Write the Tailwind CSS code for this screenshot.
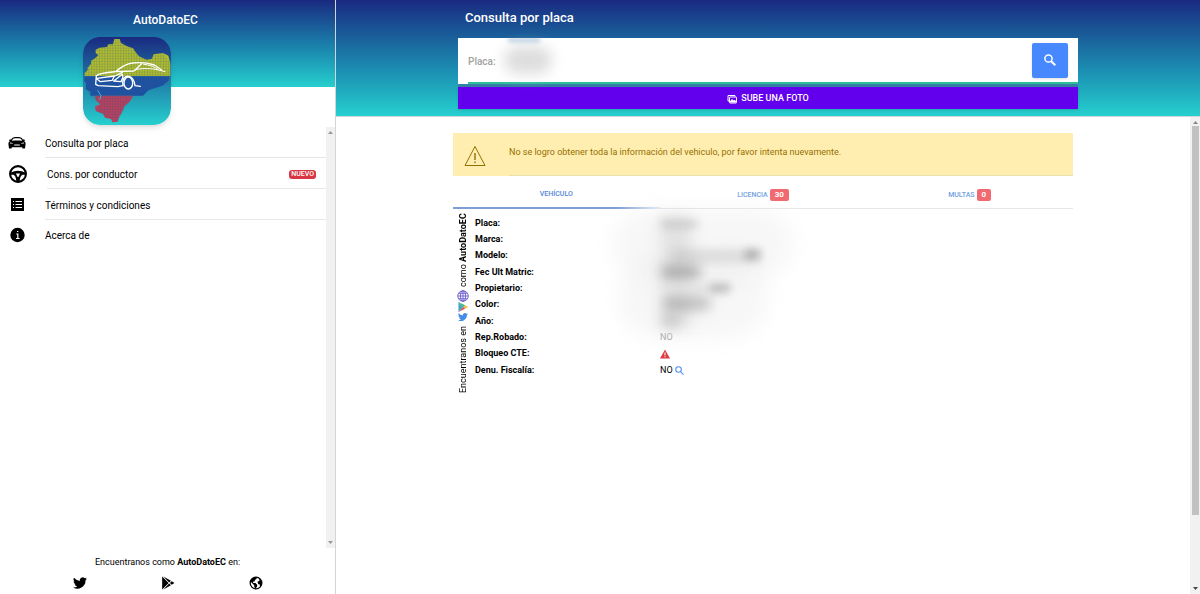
<!DOCTYPE html>
<html lang="es">
<head>
  <meta charset="utf-8">
  <meta name="viewport" content="width=device-width, initial-scale=1">
  <title>AutoDatoEC</title>
  <script src="https://cdn.jsdelivr.net/npm/@tailwindcss/browser@4"></script>
</head>
<body class="flex h-screen overflow-hidden bg-white font-[Roboto,sans-serif] text-black">

  <!-- Side menu -->
  <aside class="flex w-[28%] shrink-0 flex-col border-r border-gray-300">
    <header class="h-[87px] shrink-0 bg-linear-to-b from-[#1a2980] to-[#26d0ce] pt-2">
      <h1 class="pr-1 text-center text-[12px] leading-6 font-medium text-white">AutoDatoEC</h1>
      <svg class="mt-[5px] ml-[83px] size-[88px] rounded-[17px] shadow-md" viewBox="0 0 264 264" role="img" aria-label="Logo de AutoDatoEC">
        <defs>
          <linearGradient id="sky" x1="0" y1="0" x2="0" y2="1">
            <stop offset="0" stop-color="#1a2980" />
            <stop offset="1" stop-color="#26d0ce" />
          </linearGradient>
          <pattern id="grid" width="8" height="8" patternUnits="userSpaceOnUse">
            <path d="M0 0H8M0 0V8" stroke="#1f5a8f" stroke-width="3" stroke-opacity=".45" />
          </pattern>
        </defs>
        <rect width="264" height="264" rx="50" fill="url(#sky)" />
        <path fill="#b5bd2b" d="M5 118V108L14 100V92L24 80V72L38 62L46 54L38 48V38L50 32L72 30L76 22H90L94 6H110L114 18L132 28L150 34L158 46L168 58L190 68L206 66L212 52L240 48L256 56L262 80V118Z" />
        <path fill="#1f4fa3" d="M5 118H260L256 132L238 146L214 154L196 160L180 176H22V164L8 156L10 140L4 132Z" />
        <path fill="#bd3f5b" d="M36 176H150L142 192L124 208L116 228L108 240L104 254L88 256L84 246L66 242L60 230L38 222L36 208L52 202L38 190Z" />
        <path fill="url(#grid)" d="M5 118V108L24 72L46 54L38 38L76 22L94 6H110L150 34L168 58L190 68L212 52L240 48L262 80V118L256 132L196 160L150 176L116 228L104 254L84 246L38 222L52 202L22 176L8 156Z" />
        <path fill="none" stroke="#3db4d0" stroke-width="3" d="M44 160L54 176L50 188" />
        <g fill="none" stroke="#fff" stroke-width="4" stroke-linecap="round" stroke-linejoin="round">
          <path d="M40 116C50 108 76 106 98 104C114 90 130 80 148 78C172 75 196 78 214 84L236 99M98 104L152 102C162 96 168 86 176 80" />
          <path stroke-width="3" d="M156 98C184 92 216 94 246 104M182 82C202 84 216 90 226 98" />
          <path d="M40 116L38 142L46 146L104 149L120 146M42 124L94 117L88 130L52 134L42 126M96 117L118 106M118 112L92 132L114 134L120 120Z" />
          <path d="M120 146C116 126 126 116 138 118C150 120 154 132 156 146L172 148" />
          <ellipse cx="136" cy="138" rx="13" ry="18" />
        </g>
      </svg>
    </header>

    <nav class="mt-10 flex min-h-0 flex-1">
      <ul class="min-w-0 flex-1 text-[10px]">
        <li class="flex h-[31px] items-center pl-2">
          <svg class="size-[18px] shrink-0" viewBox="0 0 512 512" aria-hidden="true">
            <path fill-rule="evenodd" d="M488 224c-3-5-33-18-33-18c17-3 25-8 25-32c0-14-8-20-24-20h-34c-18-30-36-52-58-57c-58-11-158-11-216 0c-22 5-40 27-58 57H56c-16 0-24 6-24 20c0 24 8 29 25 32c0 0-30 13-33 18c-12 14-12 50-8 98c2 28 8 42 8 42v28c0 14 6 20 16 20h50c12 0 18-8 18-18v-14h296v14c0 12 6 18 16 18h52c10 0 16-8 16-20v-28s6-14 8-42c4-48 4-84-8-98ZM130 153c9-15 20-24 32-27c50-8 138-8 188 0c12 3 23 12 32 27l20 36c-70-10-222-10-292 0ZM56 270v-30l76 18c10 4 14 6 14 14H66c-6 0-10-2-10-2Zm270 58H186c-10 0-12-4-12-10l4-14c2-6 8-8 14-8h128c8 0 12 2 14 8l4 14c0 6-2 10-12 10Zm130-58s-4 2-10 2h-80c0-8 4-10 14-14l76-18Z" />
          </svg>
          <a href="#" class="ml-[19px] flex flex-1 items-center self-stretch border-b border-gray-200 pt-0.5">Consulta por placa</a>
        </li>
        <li class="flex h-[31px] items-center pl-2">
          <svg class="size-5 shrink-0" viewBox="0 0 24 24" aria-hidden="true">
            <circle cx="12" cy="12" r="9.500" fill="none" stroke="#000" stroke-width="2.500" />
            <path d="M3 10.500Q12 5.500 21 10.500V13H17.500Q14.500 14 14 21H10Q9.500 14 6.500 13H3Z" />
            <path fill="#fff" d="M9.500 11.500H14.500L12.500 15.500H11.500Z" />
          </svg>
          <a href="#" class="ml-[19px] flex flex-1 items-center self-stretch border-b border-gray-200 pt-0.5 pr-[10px]">
            Cons. por conductor
            <span class="ml-auto rounded-[3px] bg-[#d93644] px-0.5 text-[7px] leading-[9px] font-medium text-white">NUEVO</span>
          </a>
        </li>
        <li class="flex h-[31px] items-center pl-2">
          <svg class="size-[18px] shrink-0" viewBox="0 0 18 18" aria-hidden="true">
            <path d="M3 2H16V15H3Z" />
            <path stroke="#fff" stroke-width="1" d="M5 5.500H6M7.500 5.500H14M5 8.500H6M7.500 8.500H14M5 11.500H6M7.500 11.500H14" />
          </svg>
          <a href="#" class="ml-[19px] flex flex-1 items-center self-stretch border-b border-gray-200 pt-0.5">Términos y condiciones</a>
        </li>
        <li class="flex h-[31px] items-center pl-2">
          <svg class="size-[18px] shrink-0" viewBox="0 0 18 18" aria-hidden="true">
            <circle cx="9.500" cy="8" r="7.200" />
            <path fill="none" stroke="#fff" stroke-width="1.200" d="M8.300 7H9.800V11.500M8 11.500H11.600M9 4.500H10.300" />
          </svg>
          <a href="#" class="ml-[19px] flex flex-1 items-center self-stretch">Acerca de</a>
        </li>
      </ul>
      <div class="flex w-[9px] flex-col items-center justify-between bg-[#f1f1f1] py-1" aria-hidden="true">
        <svg class="h-[3px] w-[5px]" viewBox="0 0 5 3"><path fill="#999" d="M0 3L2.500 0L5 3Z" /></svg>
        <svg class="h-[3px] w-[5px]" viewBox="0 0 5 3"><path fill="#999" d="M0 0L2.500 3L5 0Z" /></svg>
      </div>
    </nav>

    <footer class="h-[46px] shrink-0 pt-1.5 text-center text-[9px] leading-4">
      <p>Encuentranos como <b class="font-bold">AutoDatoEC</b> en:</p>
      <div class="mt-1.5 flex justify-center gap-[74px]">
        <a href="#" aria-label="Twitter">
          <svg class="size-[14px]" viewBox="0 0 24 24"><path d="M24 4.600a10 10 0 0 1-2.800.8 5 5 0 0 0 2.100-2.700 10 10 0 0 1-3.100 1.200 4.900 4.900 0 0 0-8.400 4.500A14 14 0 0 1 1.700 3.200a4.900 4.900 0 0 0 1.500 6.500 5 5 0 0 1-2.200-.6 4.900 4.900 0 0 0 3.900 4.900 5 5 0 0 1-2.200.1 4.900 4.900 0 0 0 4.600 3.400A10 10 0 0 1 0 19.500 14 14 0 0 0 21.500 7.100 10 10 0 0 0 24 4.600Z" /></svg>
        </a>
        <a href="#" aria-label="Google Play">
          <svg class="size-[14px]" viewBox="0 0 24 24"><path d="M2 1L13 12L2 23ZM4 1L17 8L14 11ZM4 23L17 16L14 13ZM18.500 8.800L23 12L18.500 15.200L15.300 12Z" /></svg>
        </a>
        <a href="#" aria-label="Sitio web">
          <svg class="size-[14px]" viewBox="0 0 24 24"><circle cx="12" cy="12" r="10" fill="none" stroke="#000" stroke-width="2.200" /><path d="M3 6L8 2.500L13 2V5L10 7V9L7 10V12H11L14 15V18L11 22L9 19V16L3 10ZM17 4L22 9V15L19 18L18 14H16L14.500 10L18 8Z" /></svg>
        </a>
      </div>
    </footer>
  </aside>

  <!-- Vehicle lookup -->
  <main class="flex min-w-0 flex-1 flex-col">
    <header class="h-[117px] shrink-0 border-b border-gray-300 bg-linear-to-b from-[#1a2980] to-[#26d0ce] pt-[6px]">
      <form class="mx-auto w-[620px] max-w-full">
        <h2 class="pl-[7px] text-[13px] leading-6 font-medium text-white">Consulta por placa</h2>
        <div class="mt-2 flex h-[46px] bg-white pl-[10px]">
          <div class="relative flex flex-1 items-center border-b-2 border-[#2dbf9a] pr-[10px]">
            <label for="placa" class="pt-0.5 text-[10px] font-medium text-neutral-400">Placa:</label>
            <input id="placa" type="text" class="relative z-10 h-8 min-w-0 flex-1 bg-transparent px-2 text-[10px] outline-none">
            <span class="absolute top-2 left-9 h-7 w-12 rounded-full bg-neutral-300/80 blur-[7px]" aria-hidden="true"></span>
            <span class="absolute top-0 left-10 h-1 w-8 bg-[#1f6aa5]/30 blur-[2px]" aria-hidden="true"></span>
            <button type="button" aria-label="Buscar" class="flex h-[35px] w-[36px] items-center justify-center rounded-[2px] bg-[#4788ff] shadow-sm">
              <svg class="size-[14px]" viewBox="0 0 14 14" fill="none" stroke="#fff"><circle cx="5.500" cy="5.500" r="3.600" stroke-width="1.500" /><path stroke-width="2" d="M8.200 8.200L12.300 12.300" /></svg>
            </button>
          </div>
        </div>
        <div class="h-[3px] bg-[#3580a8]"></div>
        <button type="button" class="flex h-[22px] w-full items-center justify-center gap-1 bg-[#6200ee] pt-px text-[9px] font-medium text-white shadow-sm">
          <svg class="size-[10px]" viewBox="0 0 20 20" fill="none" stroke="#fff" stroke-width="2"><path d="M4 14H2V3H16V5" /><rect x="5" y="6" width="14" height="12" rx="1" /><path fill="#fff" d="M6 16L10 11L13 14L15 12L18 16Z" /></svg>
          SUBE UNA FOTO
        </button>
      </form>
    </header>

    <div class="flex min-h-0 flex-1">
      <div class="min-w-0 flex-1 overflow-hidden pt-4">
        <div class="mx-auto w-[620px] max-w-full">
          <div class="flex h-[43px] items-center bg-[#ffeeb0] pl-[11px] text-[#947000]">
            <svg class="mt-0.5 size-[22px]" viewBox="0 0 22 22" fill="none" stroke="currentColor"><path d="M11 1.500L21 20.500H1Z" /><path stroke-width="1.400" d="M11 8V15M11 16.500V18" /></svg>
            <p class="ml-[23px] flex flex-1 items-center self-stretch border-b border-[#ecdfae] pb-0.5 text-[9px]">No se logro obtener toda la información del vehiculo, por favor intenta nuevamente.</p>
          </div>

          <div role="tablist" class="grid h-[33px] grid-cols-3 text-[7px] font-medium text-[#6f9fdf]">
            <button type="button" role="tab" aria-selected="true" class="flex flex-col pt-1 text-[#4f86d6]">
              <span class="flex flex-1 items-center self-center pt-0.5">VEHÍCULO</span>
              <span class="h-0.5 w-full bg-linear-to-r from-[#7b9fd6] from-80% to-[#7b9fd6]/20"></span>
            </button>
            <button type="button" role="tab" aria-selected="false" class="flex items-center justify-center gap-0.5 border-b border-gray-200 pt-1.5">LICENCIA <span class="rounded-[2px] bg-[#f06a70] px-[5px] text-[8px] leading-[12px] font-bold text-white">30</span></button>
            <button type="button" role="tab" aria-selected="false" class="flex items-center justify-center gap-0.5 border-b border-gray-200 pt-1.5">MULTAS <span class="rounded-[2px] bg-[#f06a70] px-[5px] text-[8px] leading-[12px] font-bold text-white">0</span></button>
          </div>

          <div class="flex">
            <div class="flex h-[184px] w-5 rotate-180 items-center justify-start text-[9px] leading-none [writing-mode:vertical-rl]">
              <span>Encuentranos en</span>
              <svg class="mt-1 size-[10px] rotate-180" viewBox="0 0 24 24" fill="#438de8"><path d="M24 4.600a10 10 0 0 1-2.800.8 5 5 0 0 0 2.100-2.700 10 10 0 0 1-3.100 1.200 4.900 4.900 0 0 0-8.400 4.500A14 14 0 0 1 1.700 3.200a4.900 4.900 0 0 0 1.500 6.500 5 5 0 0 1-2.200-.6 4.900 4.900 0 0 0 3.900 4.900 5 5 0 0 1-2.200.1 4.900 4.900 0 0 0 4.600 3.400A10 10 0 0 1 0 19.500 14 14 0 0 0 21.500 7.100 10 10 0 0 0 24 4.600Z" /></svg>
              <svg class="my-[3px] size-[10px] rotate-180" viewBox="0 0 24 24"><path fill="#43a5c8" d="M1 0L13 12L1 24Z" /><path fill="#39b875" d="M1 0L17 8L13 12Z" /><path fill="#f6b73c" d="M17 8L24 12L17 16L13 12Z" /><path fill="#e5504c" d="M1 24L17 16L13 12Z" /></svg>
              <svg class="size-[12px] rotate-180" viewBox="0 0 24 24" fill="none" stroke="#5548c4" stroke-width="1.600"><circle cx="12" cy="12" r="10.500" /><ellipse cx="12" cy="12" rx="5" ry="10.500" /><path d="M12 1.500V22.500M1.500 12H22.500M3.500 6.500H20.500M3.500 17.500H20.500" /></svg>
              <span class="mt-[3px]">como <b class="font-bold">AutoDatoEC</b></span>
            </div>
            <div class="relative flex-1 pt-[7px] pl-0.5">
              <table class="w-full table-fixed text-left text-[9px]">
                <tbody>
                  <tr class="h-[16px]"><th class="w-[185px] font-bold">Placa:</th><td></td></tr>
                  <tr class="h-[16px]"><th>Marca:</th><td></td></tr>
                  <tr class="h-[16px]"><th>Modelo:</th><td></td></tr>
                  <tr class="h-[17px]"><th>Fec Ult Matric:</th><td></td></tr>
                  <tr class="h-[16px]"><th>Propietario:</th><td></td></tr>
                  <tr class="h-[16px]"><th>Color:</th><td></td></tr>
                  <tr class="h-[17px]"><th>Año:</th><td></td></tr>
                  <tr class="h-[16px]"><th>Rep.Robado:</th><td class="text-neutral-400">NO</td></tr>
                  <tr class="h-[16px]">
                    <th>Bloqueo CTE:</th>
                    <td><svg class="size-[10px]" viewBox="0 0 20 20" role="img" aria-label="Alerta"><path fill="#dc3c41" d="M10 1L20 19H0Z" /><path stroke="#fff" stroke-width="2" d="M10 7V13M10 14.500V16.500" /></svg></td>
                  </tr>
                  <tr class="h-[17px]">
                    <th>Denu. Fiscalía:</th>
                    <td><span class="flex items-center gap-0.5">NO <svg class="size-[9px]" viewBox="0 0 14 14" fill="none" stroke="#4a8de8" stroke-width="1.600"><circle cx="5.500" cy="5.500" r="4.300" /><path d="M8.600 8.600L13.300 13.300" /></svg></span></td>
                  </tr>
                </tbody>
              </table>
              <!-- Hidden personal values -->
              <div class="pointer-events-none absolute inset-0" aria-hidden="true">
                <div class="absolute top-0 left-[140px] h-[70px] w-[180px] rounded-full bg-neutral-200/30 blur-[10px]"></div>
                <div class="absolute top-[50px] left-[145px] h-[80px] w-[150px] rounded-full bg-neutral-200/30 blur-[10px]"></div>
                <div class="absolute top-[8px] left-[188px] h-[110px] w-[30px] bg-neutral-300/60 blur-[8px]"></div>
                <div class="absolute top-[11px] left-[188px] h-[8px] w-[36px] bg-neutral-400/40 blur-[4px]"></div>
                <div class="absolute top-[42px] left-[200px] h-[10px] w-[85px] bg-neutral-400/40 blur-[6px]"></div>
                <div class="absolute top-[41px] left-[272px] h-[9px] w-[15px] bg-neutral-500/50 blur-[4px]"></div>
                <div class="absolute top-[57px] left-[189px] h-[12px] w-[38px] bg-neutral-500/50 blur-[6px]"></div>
                <div class="absolute top-[75px] left-[215px] h-[9px] w-[40px] bg-neutral-300/50 blur-[5px]"></div>
                <div class="absolute top-[75px] left-[237px] h-[8px] w-[20px] bg-neutral-500/40 blur-[4px]"></div>
                <div class="absolute top-[88px] left-[191px] h-[13px] w-[46px] bg-neutral-500/40 blur-[6px]"></div>
                <div class="absolute top-[107px] left-[189px] h-[10px] w-[18px] bg-neutral-400/50 blur-[6px]"></div>
              </div>
            </div>
          </div>
        </div>
      </div>
      <div class="flex w-[10px] flex-col items-center bg-[#f1f1f1] py-1" aria-hidden="true">
        <svg class="h-[3px] w-[5px] shrink-0" viewBox="0 0 5 3"><path fill="#888" d="M0 3L2.500 0L5 3Z" /></svg>
        <div class="mt-0.5 h-[83%] w-[7px] bg-[#c1c1c1]"></div>
        <svg class="mt-auto h-[3px] w-[5px] shrink-0" viewBox="0 0 5 3"><path fill="#444" d="M0 0L2.500 3L5 0Z" /></svg>
      </div>
    </div>
  </main>
</body>
</html>
